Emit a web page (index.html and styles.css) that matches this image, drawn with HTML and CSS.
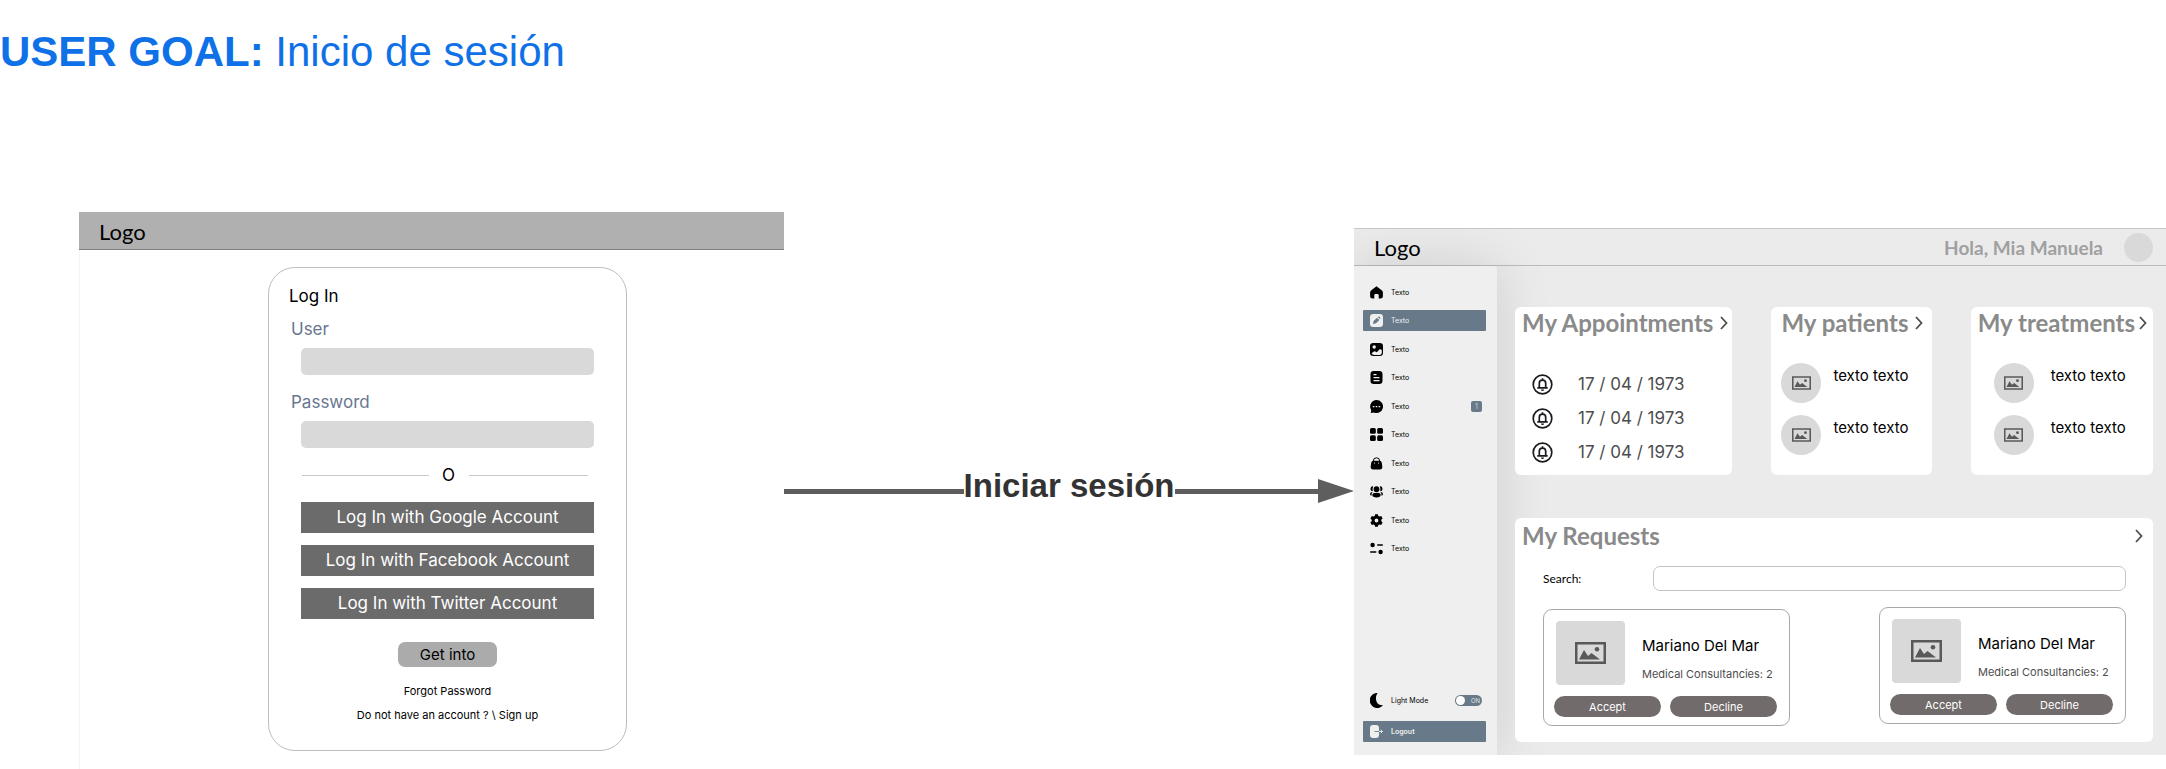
FILE: index.html
```html
<!DOCTYPE html>
<html lang="es">
<head>
<meta charset="utf-8">
<title>User goal: Inicio de sesión</title>
<link rel="stylesheet" href="styles.css">
</head>
<body>
<svg class="defs" aria-hidden="true">
  <symbol id="picture" viewBox="0 0 31 22">
    <path fill-rule="evenodd" d="M0 0h31v22H0zM2.500 2.500v17h26v-17z"/>
    <path d="M4 17.500 9 8l4 6 3.500-3 8.500 6.500z"/>
    <circle cx="22" cy="7.200" r="2.300"/>
  </symbol>
  <symbol id="bell" viewBox="0 0 21 21">
    <g fill="none" stroke="currentColor" stroke-width="1.700">
      <circle cx="10.500" cy="10.500" r="9.300"/>
      <path d="M7.300 13.500V9.300a3.200 3.200 0 0 1 6.400 0v4.200M5.300 13.900h10.400M10.500 6V4.300"/>
    </g>
    <path d="M9 15.600h3a1.500 1.500 0 0 1-3 0z"/>
  </symbol>
  <symbol id="chevron" viewBox="0 0 8 14">
    <path d="M1 1l5.500 6L1 13" fill="none" stroke="currentColor" stroke-width="1.800"/>
  </symbol>
</svg>

<h1 class="title"><b>USER GOAL:</b> Inicio de sesión</h1>

<main class="flow">
  <section class="login">
    <header class="login-bar">Logo</header>
    <form class="login-card">
      <h2 class="login-title">Log In</h2>
      <label class="field-label" for="user">User</label>
      <input class="field" id="user" type="text">
      <label class="field-label" for="password">Password</label>
      <input class="field" id="password" type="password">
      <div class="divider"><span>O</span></div>
      <div class="providers">
        <button class="provider" type="button">Log In with Google Account</button>
        <button class="provider" type="button">Log In with Facebook Account</button>
        <button class="provider" type="button">Log In with Twitter Account</button>
      </div>
      <button class="submit" type="submit">Get into</button>
      <a class="small-link" href="#">Forgot Password</a>
      <a class="small-link" href="#">Do not have an account ? \ Sign up</a>
    </form>
  </section>

  <div class="arrow">
    <span class="arrow-line"></span>
    <span class="arrow-label">Iniciar sesión</span>
    <span class="arrow-line"></span>
    <svg class="arrow-head" viewBox="0 0 36 24"><path d="M0 0l36 12L0 24z"/></svg>
  </div>

  <section class="dashboard">
    <header class="top-bar">
      <span class="top-logo">Logo</span>
      <span class="greeting">Hola, Mia Manuela</span>
      <span class="avatar"></span>
    </header>
    <nav class="sidebar">
      <div class="menu">
        <a class="item" href="#"><svg class="icon" viewBox="0 0 13 13"><path d="M6.500.300 12 4.500q.900.800.900 2v3.700q0 2.400-2.400 2.400H8.700V9.300q0-1.200-1.200-1.200h-2q-1.200 0-1.200 1.200v3.300H2.500Q.100 12.600.100 10.200V6.500q0-1.200.900-2z"/></svg>Texto</a>
        <a class="item active" href="#"><svg class="icon" viewBox="0 0 13 13"><rect width="13" height="13" rx="3.200"/><path class="cut" d="M3 10l.6-3L7 3.700l2.300 2.200L6 9.300zM7.700 3.100l1-.7q1.300-.1 1.800 1.700l-.6 1z"/></svg>Texto</a>
        <a class="item" href="#"><svg class="icon" viewBox="0 0 13 13"><rect width="13" height="13" rx="3.200"/><circle class="cut" cx="4.200" cy="4" r="1.700"/><path class="cut" d="M1.500 10.300 4 8.600q1-.6 1.800.2.800.8 1.800-.2l1.700-2q1.200-1 2.500.3v3Q11.500 12 9.500 12h-5Q2.200 12 1.500 10.300z"/></svg>Texto</a>
        <a class="item" href="#"><svg class="icon" viewBox="0 0 13 13"><rect x=".5" width="12" height="13" rx="3.200"/><path class="cut" d="M3.500 3h3v1.200h-3zM3.500 6h6v1.200h-6zM3.500 9h6v1.200h-6z"/></svg>Texto</a>
        <a class="item" href="#"><svg class="icon" viewBox="0 0 13 13"><path d="M6.500 0a6.500 6.500 0 1 1-2.700 12.400L.8 13l.4-3A6.500 6.500 0 0 1 6.500 0z"/><path class="cut" d="M2.800 6h1.600v1.300H2.800zM5.700 6h1.600v1.300H5.700zM8.600 6h1.600v1.300H8.600z"/></svg>Texto<span class="badge">1</span></a>
        <a class="item" href="#"><svg class="icon" viewBox="0 0 13 13"><rect width="5.800" height="5.800" rx="1.500"/><rect x="7.200" width="5.800" height="5.800" rx="1.500"/><rect y="7.200" width="5.800" height="5.800" rx="1.500"/><rect x="7.200" y="7.200" width="5.800" height="5.800" rx="1.500"/></svg>Texto</a>
        <a class="item" href="#"><svg class="icon" viewBox="0 0 13 13"><path d="M3.300 4.500V4a3.200 3.200 0 0 1 6.400 0v.5" fill="none" stroke="currentColor"/><path d="M3.500 3.800h6q2 0 2.300 2l.5 3.700q.3 3-2.500 3H3.200q-2.800 0-2.500-3l.5-3.700q.3-2 2.300-2z"/><circle class="cut" cx="4.500" cy="6" r=".6"/><circle class="cut" cx="8.500" cy="6" r=".6"/></svg>Texto</a>
        <a class="item" href="#"><svg class="icon" viewBox="0 0 13 13"><circle cx="6.500" cy="4.200" r="2.900"/><ellipse cx="6.500" cy="10.100" rx="4.200" ry="2.300"/><path d="M3.200 1.200A2.500 2.500 0 0 0 2.800 6.200Q2.300 3.500 3.200 1.200zM9.800 1.200A2.500 2.500 0 0 1 10.200 6.200Q10.700 3.500 9.800 1.200zM2.600 7Q0 7.200 0 9q0 1.400 1.500 1.800Q1.200 8.500 2.600 7zM10.400 7Q13 7.200 13 9q0 1.400-1.500 1.800Q11.800 8.500 10.400 7z"/></svg>Texto</a>
        <a class="item" href="#"><svg class="icon" viewBox="0 0 13 13"><path fill-rule="evenodd" d="M5.100.2h2.800l.4 1.700 1.200.7 1.700-.5 1.400 2.400-1.300 1.200v1.600l1.300 1.200-1.400 2.400-1.700-.5-1.200.7-.4 1.700H5.100l-.4-1.700-1.200-.7-1.700.5L.4 8.500l1.300-1.200V5.700L.4 4.500l1.400-2.400 1.700.5 1.200-.7zM6.500 4.600a1.900 1.900 0 1 0 0 3.800 1.900 1.900 0 0 0 0-3.800z"/></svg>Texto</a>
        <a class="item" href="#"><svg class="icon" viewBox="0 0 13 13"><circle cx="2.600" cy="3" r="2.200"/><rect x="7" y="2.300" width="6" height="1.500" rx=".7"/><rect y="9.200" width="6.500" height="1.500" rx=".7"/><circle cx="10.600" cy="10" r="2.200"/></svg>Texto</a>
      </div>
      <div class="menu-foot">
        <div class="item"><svg class="icon moon" viewBox="0 0 13 15"><path d="M7.500 0A7.500 7.500 0 1 0 13 12.300Q8.500 12.500 6.700 9 4.800 4.500 7.500 0z"/></svg><label for="mode">Light Mode</label><span class="switch"><input id="mode" type="checkbox"><span>ON</span></span></div>
        <a class="item active logout" href="#"><svg class="icon" viewBox="0 0 13 13"><path d="M3 0h3q3 0 3 3v7q0 3-3 3H3q-3 0-3-3V3q0-3 3-3z"/><path d="M9 6.500h3.500M10.700 4.700l1.800 1.800-1.800 1.800" fill="none" stroke="currentColor" stroke-width=".9"/><path d="M4.500 6.500H9" fill="none" stroke="#687a89" stroke-width=".9"/></svg>Logout</a>
      </div>
    </nav>
    <div class="content">
      <section class="panel appointments">
        <h2 class="panel-title">My Appointments<svg class="chevron"><use href="#chevron"/></svg></h2>
        <ul class="dates">
          <li><svg class="bell"><use href="#bell"/></svg>17 / 04 / 1973</li>
          <li><svg class="bell"><use href="#bell"/></svg>17 / 04 / 1973</li>
          <li><svg class="bell"><use href="#bell"/></svg>17 / 04 / 1973</li>
        </ul>
      </section>
      <section class="panel patients">
        <h2 class="panel-title">My patients<svg class="chevron"><use href="#chevron"/></svg></h2>
        <ul class="people">
          <li><span class="round"><svg><use href="#picture"/></svg></span>texto texto</li>
          <li><span class="round"><svg><use href="#picture"/></svg></span>texto texto</li>
        </ul>
      </section>
      <section class="panel treatments">
        <h2 class="panel-title">My treatments<svg class="chevron"><use href="#chevron"/></svg></h2>
        <ul class="people">
          <li><span class="round"><svg><use href="#picture"/></svg></span>texto texto</li>
          <li><span class="round"><svg><use href="#picture"/></svg></span>texto texto</li>
        </ul>
      </section>
      <section class="panel requests">
        <h2 class="panel-title">My Requests<svg class="chevron"><use href="#chevron"/></svg></h2>
        <div class="search">
          <label for="search">Search:</label>
          <input id="search" type="text">
        </div>
        <div class="request-list">
          <article class="request">
            <div class="request-info">
              <span class="thumb"><svg><use href="#picture"/></svg></span>
              <div><h3>Mariano Del Mar</h3><p>Medical Consultancies: 2</p></div>
            </div>
            <div class="request-actions"><button type="button">Accept</button><button type="button">Decline</button></div>
          </article>
          <article class="request">
            <div class="request-info">
              <span class="thumb"><svg><use href="#picture"/></svg></span>
              <div><h3>Mariano Del Mar</h3><p>Medical Consultancies: 2</p></div>
            </div>
            <div class="request-actions"><button type="button">Accept</button><button type="button">Decline</button></div>
          </article>
        </div>
      </section>
    </div>
  </section>
</main>
</body>
</html>
```
FILE: styles.css
```css
* { box-sizing: border-box; }
body {
  margin: 0;
  min-height: 100vh;
  display: flex;
  flex-direction: column;
  background: #fff;
  color: #000;
  font-family: Inter, "Liberation Sans", sans-serif;
}
h1, h2, h3, p, ul { margin: 0; padding: 0; font-weight: 400; }
ul { list-style: none; }
a { color: inherit; text-decoration: none; }
button, input { font: inherit; border: 0; margin: 0; padding: 0; }
svg { display: block; flex: none; fill: currentColor; }
.defs { position: absolute; width: 0; height: 0; }

.title {
  padding-top: 28px;
  font: 42px/48px "Liberation Sans", Arial, sans-serif;
  color: #0f71e8;
}
.flow {
  flex: 1;
  display: grid;
  grid-template-columns: 705fr 570fr 812fr;
  margin-top: 136px;
  padding-left: 79px;
}

/* Login screen */
.login { border-left: 1px solid #f4f4f4; }
.login-bar {
  height: 38px;
  margin-left: -1px;
  padding-left: 20px;
  border-bottom: 1px solid #808080;
  background: #b0b0b0;
  font: 22px/40px Lato, sans-serif;
}
.login-card {
  display: flex;
  flex-direction: column;
  width: 359px;
  margin: 17px 0 0 188px;
  padding: 18px 20px 27px;
  border: 1px solid #bdbdbd;
  border-radius: 27px;
}
.login-title { font-size: 17px; line-height: 20px; }
.field-label {
  margin: 13px 0 9px;
  padding-left: 2px;
  font-size: 17px;
  line-height: 20px;
  color: #68768f;
}
.field {
  height: 27px;
  margin: 0 12px;
  padding: 0 8px;
  border-radius: 5px;
  background: #d9d9d9;
}
.field + .field-label { margin-top: 17px; }
.divider {
  display: grid;
  grid-template-columns: 126fr 40px 119fr;
  align-items: center;
  margin: 17px 18px 17px 13px;
  font-size: 17px;
  line-height: 20px;
  text-align: center;
}
.divider::before, .divider::after { content: ""; height: 1px; background: #c8c8c8; }
.providers { display: grid; gap: 12px; margin: 0 12px; }
.provider { height: 31px; padding-bottom: 2px; background: #6b6b6b; color: #fff; font-size: 17px; }
.submit {
  align-self: center;
  width: 99px;
  height: 25px;
  margin: 23px 0 8px;
  border-radius: 7px;
  background: #ababab;
  font-size: 15px;
}
.small-link { align-self: center; margin-top: 8px; font-size: 11px; line-height: 16px; }

/* Transition arrow */
.arrow { display: flex; align-items: center; align-self: start; margin-top: 259px; height: 40px; }
.arrow-line { flex: 179; height: 5px; background: #5e5e5e; }
.arrow-line:last-of-type { flex: 143; }
.arrow-head { width: 36px; height: 24px; color: #5e5e5e; }
.arrow-label {
  padding-bottom: 10px;
  font: bold 33px/38px "Liberation Sans", Arial, sans-serif;
  color: #333;
}

/* Dashboard screen */
.dashboard {
  display: grid;
  grid-template-columns: 143px 1fr;
  align-self: start;
  margin-top: 16px;
  background: #ebebeb;
  overflow: hidden;
}
.top-bar {
  grid-column: 1 / -1;
  display: flex;
  align-items: center;
  height: 38px;
  padding: 0 13px 0 20px;
  border-top: 1px solid #c8c8c8;
  border-bottom: 1px solid #bbb;
  font-family: Lato, sans-serif;
}
.top-logo { padding-top: 2px; font-size: 22px; line-height: 34px; }
.greeting { margin-left: auto; font-size: 19px; font-weight: 700; color: #a0a0a0; }
.avatar { width: 29px; height: 29px; margin-left: 21px; border-radius: 50%; background: #d9d9d9; }

.sidebar {
  display: flex;
  flex-direction: column;
  justify-content: space-between;
  padding: 16px 11px 13px 9px;
  border-radius: 0 4px 0 0;
  background: #efefef;
  box-shadow: 0 0 56px rgba(0, 0, 0, .13);
  font-size: 7px;
}
.menu { display: flex; flex-direction: column; justify-content: space-between; height: 277px; }
.menu-foot { display: grid; gap: 10px; }
.item {
  display: flex;
  align-items: center;
  gap: 8px;
  height: 21px;
  padding: 0 4px 0 7px;
  border-radius: 1px;
}
.icon { width: 13px; height: 13px; }
.moon { height: 15px; }
.cut { fill: #efefef; }
.active { background: #687a89; color: #efefef; }
.active .cut { fill: #687a89; }
.logout { font-weight: 600; }
.badge {
  width: 11px;
  height: 11px;
  margin-left: auto;
  border-radius: 2px;
  background: #687a89;
  color: #c8d0d6;
  line-height: 11px;
  text-align: center;
}
.switch {
  display: flex;
  align-items: center;
  justify-content: space-between;
  width: 27px;
  height: 11px;
  margin-left: auto;
  padding: 0 2px 0 1px;
  border-radius: 6px;
  background: #687a89;
  color: #dfe4e8;
  font-size: 6px;
}
.switch input { appearance: none; width: 9px; height: 9px; border-radius: 50%; background: #fff; }

.content {
  display: grid;
  grid-template-columns: 217fr 160fr 182fr;
  gap: 43px 39px;
  padding: 41px 13px 13px 18px;
}
.panel { min-width: 0; border-radius: 6px; background: #fff; }
.panel-title {
  display: flex;
  align-items: center;
  gap: 7px;
  font: bold 24px/32px Lato, sans-serif;
  color: #8a8a8a;
  white-space: nowrap;
}
.chevron { width: 8px; height: 14px; color: #4d4d4d; }
.appointments { height: 168px; padding-left: 7px; }
.patients { padding-left: 10px; }
.treatments { padding-left: 7px; }
.treatments .panel-title { gap: 4px; }
.dates { display: grid; gap: 10px; margin: 33px 0 0 10px; }
.dates li {
  display: flex;
  align-items: center;
  gap: 25px;
  height: 24px;
  font-size: 17px;
  color: #4d4d4d;
}
.bell { width: 21px; height: 21px; color: #1b1b1f; }
.people { display: grid; gap: 12px; margin-top: 24px; }
.people li { display: flex; gap: 12px; font-size: 15px; line-height: 26px; }
.treatments .people { margin-left: 16px; }
.treatments .people li { gap: 17px; }
.round {
  display: grid;
  place-items: center;
  width: 40px;
  height: 40px;
  border-radius: 50%;
  background: #d9d9d9;
  color: #595959;
}
.round svg { width: 19px; height: 14px; }

.requests { grid-column: 1 / -1; padding: 2px 27px 16px 28px; }
.requests .panel-title { justify-content: space-between; margin: 0 -17px 0 -21px; }
.search { display: flex; align-items: center; margin: 14px 0 16px; font: 12px/16px Lato, sans-serif; }
.search label { width: 110px; }
.search input {
  flex: 1;
  height: 25px;
  padding: 0 8px;
  border: 1px solid #c4c4c4;
  border-radius: 7px;
  background: #fff;
}
.request-list { display: flex; justify-content: space-between; height: 119px; }
.request {
  align-self: end;
  width: 247px;
  height: 117px;
  padding: 11px 10px 0;
  border: 1px solid #a8a8a8;
  border-radius: 9px;
}
.request + .request { align-self: start; }
.request-info { display: flex; gap: 17px; padding-left: 2px; white-space: nowrap; }
.thumb {
  display: grid;
  place-items: center;
  width: 69px;
  height: 64px;
  border-radius: 4px;
  background: #d9d9d9;
  color: #595959;
}
.thumb svg { width: 31px; height: 22px; }
.request h3 { margin: 15px 0 10px; font-size: 15px; line-height: 20px; }
.request p { font-size: 11px; line-height: 16px; color: #4d4d4d; }
.request-actions { display: flex; gap: 9px; margin-top: 11px; }
.request-actions button {
  width: 107px;
  height: 21px;
  border-radius: 11px;
  background: #726b6b;
  color: #fff;
  font-size: 11px;
}
```
